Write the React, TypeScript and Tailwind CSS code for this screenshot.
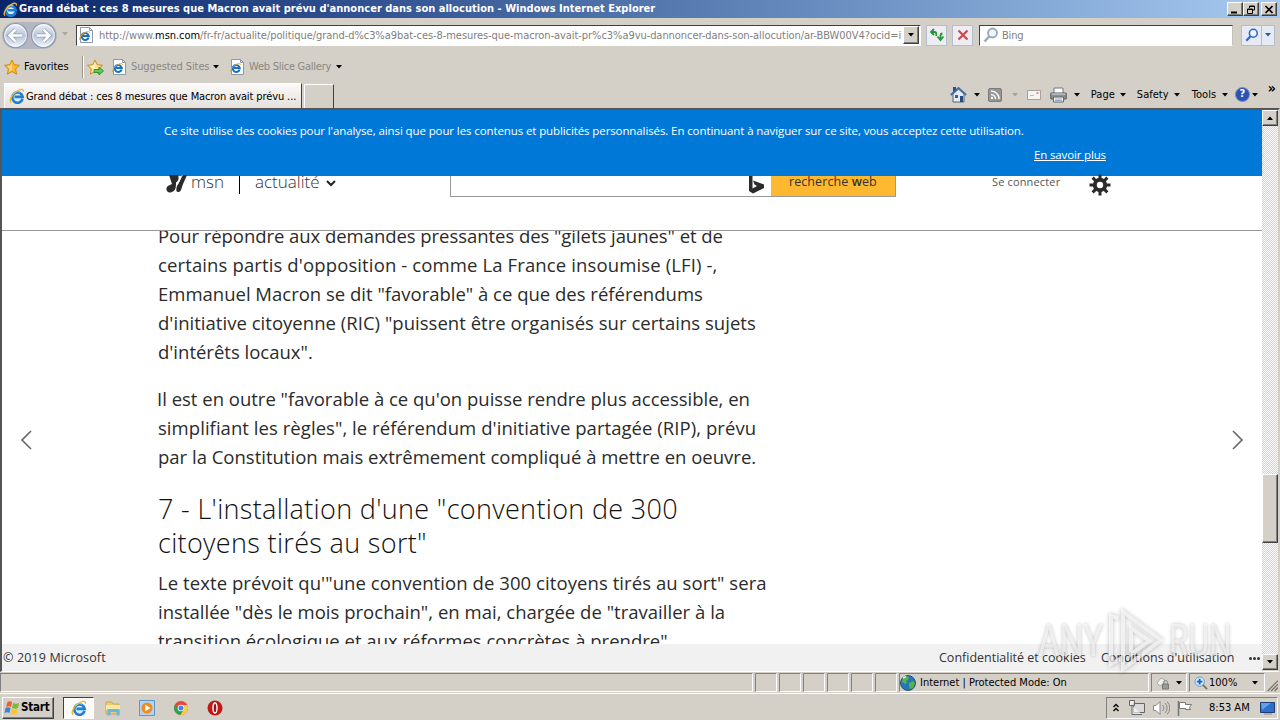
import type { ReactNode } from 'react'

const paragraphs = [
  {
    className: 'h-[144px]',
    lines: [
      { text: 'Pour répondre aux demandes pressantes des "gilets jaunes" et de', tracking: 'tracking-[-0.05px]' },
      { text: "certains partis d'opposition - comme La France insoumise (LFI) -,", tracking: 'tracking-[0.125px]' },
      { text: 'Emmanuel Macron se dit "favorable" à ce que des référendums', tracking: '' },
      { text: 'd\'initiative citoyenne (RIC) "puissent être organisés sur certains sujets', tracking: 'tracking-[0.03px]' },
      { text: 'd\'intérêts locaux".', tracking: '' },
    ],
  },
  {
    className: 'mt-[19px] h-[87px]',
    lines: [
      { text: 'Il est en outre "favorable à ce qu\'on puisse rendre plus accessible, en', tracking: '-ml-px tracking-[0px]' },
      { text: 'simplifiant les règles", le référendum d\'initiative partagée (RIP), prévu', tracking: 'tracking-[0.055px]' },
      { text: 'par la Constitution mais extrêmement compliqué à mettre en oeuvre.', tracking: '' },
    ],
  },
]

const lastParagraph = [
  { text: 'Le texte prévoit qu\'"une convention de 300 citoyens tirés au sort" sera', tracking: 'tracking-[0.075px]' },
  { text: 'installée "dès le mois prochain", en mai, chargée de "travailler à la', tracking: 'tracking-[0.02px]' },
  { text: 'transition écologique et aux réformes concrètes à prendre".', tracking: '' },
]

const raised = 'border border-t-white border-l-white border-r-[#404040] border-b-[#404040] bg-[#d4d0c8] shadow-[inset_-1px_-1px_0_#808080]'
const sunken = 'border border-t-[#808080] border-l-[#808080] border-r-white border-b-white'

function IeIcon({ size = 16 }: { size?: number }) {
  return (
    <svg width={size} height={size} viewBox="0 0 16 16" fill="none" className="shrink-0">
      <circle cx="8.2" cy="8.6" r="4.8" fill="#d8eefb" />
      <path d="M13.5 10.8A5.2 5.2 0 1 1 13.6 8.8H5.5" stroke="#1f7fd6" strokeWidth="2.7" />
      <path d="M4.2 6a4.8 4.8 0 0 1 6.8-1.8" stroke="#74ccf8" strokeWidth="1.3" />
      <path d="M2.2 14.6C-.6 12.5 3.5 5.5 9 2.5c3.5-1.9 6-1.4 5.2 1.3" stroke="#f2b824" strokeWidth="1.4" />
    </svg>
  )
}

function IePage() {
  return (
    <svg width="16" height="16" viewBox="0 0 16 16" fill="none" className="shrink-0">
      <path d="M2.5.5h9l3 3v12h-12z" fill="#fff" stroke="#8d98a8" />
      <path d="M11.5.5v3h3" stroke="#8d98a8" />
      <path d="M10.6 10.5A3.5 3.5 0 1 1 10.7 9H5" stroke="#1c70c4" strokeWidth="2.1" />
      <path d="M2 13.2C.5 11 4 6.5 8 5c2.5-.8 4-.4 3.5 1" stroke="#e5ae26" />
    </svg>
  )
}

function Caret({ className = 'text-black' }: { className?: string }) {
  return (
    <svg width="6" height="4" viewBox="0 0 6 4" className={`shrink-0 ${className}`}>
      <path d="M0 0h6L3 3.5z" fill="currentColor" />
    </svg>
  )
}

function Star({ arrow = false }: { arrow?: boolean }) {
  return (
    <svg width="17" height="17" viewBox="0 0 17 17" className="shrink-0">
      <path d="M8 1l2.2 4.7 5.3.6-3.9 3.6 1 5.2L8 12.5l-4.6 2.6 1-5.2L.5 6.3l5.3-.6z" fill={arrow ? '#fbe58b' : '#fdb92e'} stroke="#cf8a17" />
      <path d="M8 3v8l-3 1.8.8-3.3L3 7l3.5-.5z" fill="#fff" opacity=".45" />
      {arrow && <path d="M7 10.5h5V8l4.5 4-4.5 4v-2.5H7z" fill="#5ccb4c" stroke="#278528" strokeWidth=".8" />}
    </svg>
  )
}

function NavArrow({ flip = false }: { flip?: boolean }) {
  return (
    <svg width="27" height="27" viewBox="0 0 27 27" fill="none" className={flip ? '-scale-x-100' : ''}>
      <defs>
        <linearGradient id="orb" x1="0" y1="0" x2="0" y2="1">
          <stop offset="0" stopColor="#eef2f8" />
          <stop offset=".5" stopColor="#b9c5d8" />
          <stop offset="1" stopColor="#f0f7fd" />
        </linearGradient>
      </defs>
      <circle cx="13.5" cy="13.5" r="12" fill="url(#orb)" stroke="#8f99ad" strokeWidth="1.2" />
      <circle cx="13.5" cy="13.5" r="10.8" stroke="#fff" opacity=".8" />
      <path d="M13.5 7.5L7.5 13.5l6 6M8 13.5h12" stroke="#8d9cb5" strokeWidth="4" />
      <path d="M13.5 7.5L7.5 13.5l6 6M8 13.5h12" stroke="#fff" strokeWidth="2.6" />
    </svg>
  )
}

function Magnifier({ color, size = 16 }: { color: string; size?: number }) {
  return (
    <svg width={size} height={size} viewBox="0 0 16 16" fill="none" className="shrink-0">
      <circle cx="9.5" cy="6" r="4.5" fill="#eaf5fd" stroke={color} strokeWidth="1.8" />
      <path d="M6.2 9.5L1.5 14.5" stroke={color} strokeWidth="2.4" />
    </svg>
  )
}

function WindowButton({ children, className = '' }: { children: ReactNode; className?: string }) {
  return (
    <button className={`flex h-[14px] w-4 items-center justify-center ${raised} ${className}`}>
      <svg width="10" height="9" viewBox="0 0 10 9" fill="none" stroke="#000" className="shrink-0">
        {children}
      </svg>
    </button>
  )
}

function TitleBar() {
  return (
    <div className="flex h-[18px] items-center bg-linear-to-r from-[#0a246a] to-[#a6caf0] pl-[3px] pr-[3px]">
      <IeIcon size={15} />
      <span className="ml-px whitespace-nowrap text-[11px] font-bold tracking-[0.02px] text-white">
        Grand débat : ces 8 mesures que Macron avait prévu d'annoncer dans son allocution - Windows Internet Explorer
      </span>
      <div className="ml-auto flex">
        <WindowButton>
          <path d="M1 7.5h6" strokeWidth="2" />
        </WindowButton>
        <WindowButton>
          <path d="M3.5 3V1h5v4H7M3 1.5h6M1.5 4h5v4.5h-5zM1 4.5h6" />
        </WindowButton>
        <WindowButton className="ml-[2px]">
          <path d="M1.5 1l7 7M8.5 1l-7 7" strokeWidth="1.7" />
        </WindowButton>
      </div>
    </div>
  )
}

function AddressRow() {
  return (
    <div className="flex h-8 items-center pl-[2px] pr-[5px]">
      <div className="mt-[2px] flex gap-[1px] rounded-full bg-[#b4b7c2]">
        <NavArrow />
        <NavArrow flip />
      </div>
      <Caret className="ml-[5px] text-[#aaa69f]" />
      <div className="ml-[8px] mt-[2px] flex h-[21px] w-[845px] items-center border border-t-[#404040] border-l-[#404040] border-r-white border-b-white bg-white pl-px">
        <IePage />
        <span className="ml-[5px] w-[804px] overflow-hidden whitespace-nowrap pt-[2px] text-[11px] tracking-[-0.06px] text-[#808080]">
          http://www.<span className="text-black">msn.com</span>
          /fr-fr/actualite/politique/grand-d%c3%a9bat-ces-8-mesures-que-macron-avait-pr%c3%a9vu-dannoncer-dans-son-allocution/ar-BBW00V4?ocid=i
        </span>
        <span className={`flex h-[18px] w-4 items-center justify-center ${raised}`}>
          <Caret />
        </span>
      </div>
      <div className="ml-[5px] mt-[2px] flex h-[21px] w-[21px] items-center justify-center border border-[#b5bccb] bg-[#eceef4]">
        <svg width="16" height="16" viewBox="0 0 16 16" fill="none" stroke="#2a9434" strokeWidth="1.8">
          <path d="M2 5h3.5c1.200 0 1.800.8 1.800 2v2M5 2L2 5l3 3" />
          <path d="M14.5 9.500L11.500 13 8.500 9.500M11.500 13V9c0-1.500.8-2.500 2-2.500" />
        </svg>
      </div>
      <div className="ml-[5px] mt-[2px] flex h-[21px] w-[21px] items-center justify-center border border-[#b5bccb] bg-[#eceef4]">
        <svg width="12" height="12" viewBox="0 0 12 12">
          <path d="M1.5 1.5l9 9M10.5 1.5l-9 9" stroke="#d4474a" strokeWidth="2.2" />
        </svg>
      </div>
      <div className="ml-[6px] mt-[2px] flex h-[21px] w-[254px] items-center border border-t-[#404040] border-l-[#404040] border-r-[#c5c2bb] border-b-white bg-white pl-[3px] text-[11px] text-[#808080]">
        <Magnifier color="#9aa7b8" />
        <span className="ml-[3px] pt-[2px] tracking-[-0.2px]">Bing</span>
      </div>
      <div className="ml-auto mt-[2px] flex h-[21px] border border-[#b5bccb] bg-[#e6eaf4]">
        <span className="flex w-[20px] items-center justify-center border-r border-[#b5bccb]">
          <Magnifier color="#2b66cf" size={14} />
        </span>
        <span className="flex w-[12px] items-center justify-center">
          <Caret className="text-[#2a5b9c]" />
        </span>
      </div>
    </div>
  )
}

function FavoritesBar() {
  return (
    <div className="flex h-[31px] items-center pl-1 pt-[3px] text-[11px]">
      <Star />
      <span className="ml-[3px] w-[47px] text-black">Favorites</span>
      <span className="ml-[11px] h-[22px] border-l border-[#9b9890] pr-[4px] shadow-[inset_1px_0_0_#fff]" />
      <Star arrow />
      <span className="ml-[7px]" />
      <IePage />
      <span className="ml-[4px] mr-[3px] w-[79px] whitespace-nowrap tracking-[-0.1px] text-[#8a8780]">Suggested Sites</span>
      <Caret />
      <span className="ml-[10px]" />
      <IePage />
      <span className="ml-[4px] mr-[4px] w-[83px] whitespace-nowrap tracking-[-0.25px] text-[#8a8780]">Web Slice Gallery</span>
      <Caret />
    </div>
  )
}

function CommandBar() {
  return (
    <div className="ml-auto flex h-[27px] items-center pr-[4px] text-[11px] text-black">
      <svg width="17" height="17" viewBox="0 0 17 17" className="mr-[7px]">
        <path d="M3 8v8h11V8L8.5 3z" fill="#e6ecf5" stroke="#54617c" />
        <path d="M.8 9L8.5 2l7.7 7" fill="none" stroke="#4b6b9c" strokeWidth="1.8" />
        <path d="M3 1h3v3L3 6z" fill="#274da8" />
        <path d="M5 9h3v3H5z" fill="#3a5e9f" />
        <path d="M10 10h3v6h-3z" fill="#27497e" />
      </svg>
      <Caret />
      <svg width="14" height="14" viewBox="0 0 14 14" fill="none" className="ml-[8px] mr-[10px]">
        <rect x=".5" y=".5" width="13" height="13" rx="1.5" fill="#959595" stroke="#7b7b7b" />
        <path d="M3 3a8 8 0 0 1 8 8M3 6.5A4.5 4.5 0 0 1 7.5 11" stroke="#fff" strokeWidth="1.5" />
        <circle cx="4" cy="10" r="1.2" fill="#fff" />
      </svg>
      <Caret className="text-[#a5a29a]" />
      <svg width="14" height="10" viewBox="0 0 14 10" className="ml-[9px] mr-[9px]">
        <path d="M.5.5h13v9H.5z" fill="#f7f3f1" stroke="#a6a19c" />
        <path d="M9.5 2h2v2h-2z" fill="#d98d83" />
        <path d="M3 5.5h4" stroke="#bbb" />
      </svg>
      <svg width="17" height="16" viewBox="0 0 17 16" className="mr-[7px]">
        <path d="M4 1h9v6H4z" fill="#fff" stroke="#777" />
        <path d="M.8 6h15.4v6H.8z" fill="#8d8f92" stroke="#55585d" />
        <path d="M1.5 7h14" stroke="#ddd" />
        <path d="M3.5 10h10v5h-10z" fill="#f5f5f5" stroke="#666" />
        <path d="M5 12h7M5 13.5h7" stroke="#6a88b5" strokeWidth=".7" />
      </svg>
      <Caret />
      <span className="ml-[11px] mr-[3px] w-[26px] pt-px">Page</span>
      <Caret />
      <span className="ml-[11px] mr-[4px] w-[33px] pt-px">Safety</span>
      <Caret />
      <span className="ml-[12px] mr-[4px] w-[26px] pt-px">Tools</span>
      <Caret />
      <span className="ml-[7px] mr-[2px] flex h-[15px] w-[15px] items-center justify-center rounded-full border border-[#7d8caf] bg-[#2c52b8] text-[11px] font-bold text-white">
        ?
      </span>
      <Caret />
      <span className="mb-[13px] ml-[10px] text-[14px] font-bold leading-none">»</span>
    </div>
  )
}

function TabRow() {
  return (
    <div className="flex h-[27px] pl-[4px]">
      <div className="mt-[2px] flex w-[298px] items-center border border-b-0 border-l-white border-t-white border-r-[#404040] bg-linear-to-b from-[#fbfaf9] to-[#e4e0db] pl-[4px] text-[11px] text-black">
        <IeIcon />
        <span className="ml-px whitespace-nowrap pt-[2px] tracking-[-0.11px]">Grand débat : ces 8 mesures que Macron avait prévu ...</span>
      </div>
      <div className="ml-[2px] mt-[3px] w-[30px] border border-b-0 border-l-white border-t-white border-r-[#404040]" />
      <CommandBar />
    </div>
  )
}

function Header() {
  return (
    <div className="flex h-[54px] items-start bg-white pl-[163px] text-[#333]">
      <svg width="22" height="18" viewBox="0 0 22 18" className="mt-[-1px]">
        <path d="M4 0h9c1 3 1 5-2 7.5 0 4 0 8-4 9.5C3 19 0 15 2 12c1-2 4-2 5-3C6 6 5 3 4 0z" fill="#2b2b2b" />
        <path d="M22 0h-5c-1 4-3 8-5 11-1 3-1 6 1 6s3-1 4-5c1-4 3-7 5-12z" fill="#2b2b2b" />
        <path d="M17.5 0L12 10" stroke="#fff" strokeWidth=".7" />
      </svg>
      <span className="ml-[4px] h-[26px] w-[34px] font-[Open_Sans] text-[17px] font-light leading-[12px]">msn</span>
      <span className="ml-[14px] h-[18px] w-px bg-black" />
      <span className="ml-[15px] h-[26px] w-[67px] font-[Open_Sans] text-[17px] font-light leading-[12px]">actualité</span>
      <svg width="10" height="7" viewBox="0 0 10 7" fill="none" className="ml-[4px] mt-[4px]">
        <path d="M1 1l4 4 4-4" stroke="#222" strokeWidth="2" />
      </svg>
      <div className="ml-[114px] flex h-[21px] w-[446px] border border-t-0 border-[#999]">
        <svg width="16" height="18" viewBox="0 0 16 18" className="ml-[298px]">
          <path d="M0 0h3.500v12.500l4.500-2.500-2.500-1.500L4 4.500 15 8.500v3.500L4 17.500 0 15z" fill="#2b2b2b" />
        </svg>
        <span className="ml-auto w-[124px] bg-[#ffb931] pl-[18px] font-[Open_Sans] text-[12.5px] leading-[12px] tracking-[0.08px]">
          recherche <b className="font-semibold">w</b>eb
        </span>
      </div>
      <span className="ml-[96px] w-[69px] whitespace-nowrap font-[Open_Sans] text-[11px] leading-[12px] tracking-[0.15px] text-[#555]">Se connecter</span>
      <svg width="22" height="22" viewBox="-11 -11 22 22" className="ml-[28px] mt-[-2px]" fill="none" stroke="#2b2b2b">
        <circle r="5.2" strokeWidth="4" />
        <path d="M0-10.5V-6M0 6v4.5M-10.5 0H-6M6 0h4.5M-7.4-7.4l3 3M4.4 4.4l3 3M-7.4 7.4l3-3M4.4-4.4l3-3" strokeWidth="3" />
      </svg>
    </div>
  )
}

function Article() {
  return (
    <div className="h-[414px] overflow-hidden border-t border-[#999] bg-white pl-[156px] font-[Open_Sans] text-[#2b2b2b]">
      <div className="-mt-[8.6px] whitespace-nowrap text-[18.5px] leading-[28.8px]">
        {paragraphs.map((p) => (
          <div key={p.className} className={p.className}>
            {p.lines.map((line) => (
              <p key={line.text} className={line.tracking}>{line.text}</p>
            ))}
          </div>
        ))}
        <h2 className="mt-[20px] h-[68px] text-[27px] font-light leading-[34px] tracking-[0.33px] text-[#111]">
          7 - L'installation d'une "convention de 300
          <br />
          citoyens tirés au sort"
        </h2>
        <div className="mt-[9px]">
          {lastParagraph.map((line) => (
            <p key={line.text} className={line.tracking}>{line.text}</p>
          ))}
        </div>
      </div>
    </div>
  )
}

function Scrollbar() {
  return (
    <div className="mb-px flex w-4 flex-col bg-[repeating-conic-gradient(#d4d0c8_0_25%,#fff_0_50%)] bg-[length:2px_2px]">
      <span className={`flex h-4 items-center justify-center ${raised}`}>
        <Caret className="rotate-180" />
      </span>
      <span className={`mt-[348px] h-[69px] ${raised}`} />
      <span className={`mt-auto flex h-4 items-center justify-center ${raised}`}>
        <Caret />
      </span>
    </div>
  )
}

function Page() {
  return (
    <div className="flex h-[564px] border-b border-l-2 border-r-2 border-t-2 border-b-white border-l-[#555] border-r-[#d4d0c8] border-t-[#555]">
      <div className="relative flex w-[1260px] flex-col">
        <div className="flex h-[66px] flex-col bg-[#0078d7] pl-[162px] font-[Open_Sans] text-[11.5px] leading-[24px] text-white">
          <p className="mt-[9px] whitespace-nowrap tracking-[-0.105px]">
            Ce site utilise des cookies pour l'analyse, ainsi que pour les contenus et publicités personnalisés. En continuant à naviguer sur ce site, vous acceptez cette utilisation.
          </p>
          <a className="ml-[870px] whitespace-nowrap tracking-[-0.15px] underline">En savoir plus</a>
        </div>
        <Header />
        <Article />
        <div className="flex h-[27px] items-center bg-[#f1f1f1] pl-px pt-px font-[Open_Sans] text-[12.5px] text-[#333]">
          <span className="tracking-[0.13px]">© 2019 Microsoft</span>
          <span className="ml-auto w-[146px] whitespace-nowrap">Confidentialité et cookies</span>
          <span className="ml-[16px] w-[132px] whitespace-nowrap">Conditions d'utilisation</span>
          <span className="ml-[16px] mr-[2px] flex gap-[1px]">
            <i className="h-[3px] w-[3px] rounded-full bg-[#333]" />
            <i className="h-[3px] w-[3px] rounded-full bg-[#333]" />
            <i className="h-[3px] w-[3px] rounded-full bg-[#333]" />
          </span>
        </div>
        <svg width="12" height="20" viewBox="0 0 12 20" fill="none" className="absolute left-[18px] top-[320px]">
          <path d="M11 1L2 10l9 9" stroke="#666" strokeWidth="1.6" />
        </svg>
        <svg width="12" height="20" viewBox="0 0 12 20" fill="none" className="absolute right-[18px] top-[320px]">
          <path d="M1 1l9 9-9 9" stroke="#666" strokeWidth="1.6" />
        </svg>
      </div>
      <Scrollbar />
    </div>
  )
}

function StatusBar() {
  return (
    <div className="flex h-[20px] items-stretch gap-[2px] pt-px text-[11px] text-black">
      <span className={`w-[753px] shrink-0 ${sunken}`} />
      <span className={`w-[22px] shrink-0 ${sunken}`} />
      <span className={`w-[22px] shrink-0 ${sunken}`} />
      <span className={`w-[22px] shrink-0 ${sunken}`} />
      <span className={`w-[22px] shrink-0 ${sunken}`} />
      <span className={`w-[22px] shrink-0 ${sunken}`} />
      <span className={`w-[22px] shrink-0 ${sunken}`} />
      <span className={`flex w-[250px] shrink-0 items-center ${sunken}`}>
        <svg width="16" height="16" viewBox="0 0 16 16">
          <circle cx="8" cy="8" r="7.5" fill="#2376bd" stroke="#31536c" />
          <path d="M3 3c2-2 5-2 6-1L8 5 6 6l1 2-2 1-3-2zM9 8l4-2 2 2-2 5-3 1-1-3z" fill="#55b443" />
          <path d="M3 3l3-1.5" stroke="#d8f1fc" strokeWidth="1.5" />
        </svg>
        <span className="ml-[4px] whitespace-nowrap pt-[2px]">Internet | Protected Mode: On</span>
      </span>
      <span className={`flex w-[36px] shrink-0 items-center gap-[5px] pl-[4px] ${sunken}`}>
        <svg width="15" height="14" viewBox="0 0 15 14" fill="none">
          <path d="M1 7l4-5 4 2-1 3-4 3z" fill="#f1f1f1" stroke="#aaa" />
          <path d="M7.500 8V6.500a2 2 0 0 1 4 0V8" stroke="#888" />
          <path d="M6.500 8h6v5h-6z" fill="#9b9b9b" stroke="#777" />
        </svg>
        <Caret />
      </span>
      <span className={`flex w-[76px] shrink-0 items-center pl-[4px] ${sunken}`}>
        <svg width="15" height="14" viewBox="0 0 16 15" fill="none">
          <circle cx="6" cy="6" r="5" fill="#d5ecff" stroke="#5a92cf" />
          <path d="M6 3v6M3 6h6" stroke="#1c62bd" strokeWidth="2" />
          <path d="M9.5 9.5L14 14" stroke="#8c6d4d" strokeWidth="2" />
        </svg>
        <span className="w-[29px] pt-[2px]">100%</span>
        <Caret className="ml-[14px]" />
      </span>
      <svg width="12" height="14" viewBox="0 0 14 16" className="-ml-px mt-auto">
        <path d="M2 15L14 3M6 15l8-8M10 15l4-4" stroke="#77746d" strokeWidth="1.5" />
      </svg>
    </div>
  )
}

function Taskbar() {
  return (
    <div className="mt-px flex h-[27px] items-center border-t border-white pt-[1px] text-[11px] text-black">
      <button className={`ml-[2px] flex h-[22px] w-[52px] items-center pl-[1px] font-bold ${raised}`}>
        <svg width="16" height="16" viewBox="0 0 16 16" className="shrink-0">
          <path d="M3.500 2c2-1 3-1 4.500 0L7 7C5 6 4 6 2 7z" fill="#e8622c" />
          <path d="M9 3c2 1 4 1 6 0l-1 5c-2 1-4 1-6 0z" fill="#7dba35" />
          <path d="M1.500 8c2-1 3-1 5 0l-1 5c-2-1-3-1-5 0z" fill="#3e82d4" />
          <path d="M7.500 9c2 1 4 1 6 0l-1 5c-2 1-4 1-6 0z" fill="#f6c62e" />
        </svg>
        <span className="ml-px pt-px text-[11.5px] tracking-[-0.2px]">Start</span>
      </button>
      <div className="ml-[9px] flex h-[22px] w-[31px] items-center justify-center border border-l-[#404040] border-t-[#404040] border-b-white border-r-white bg-[#fbfaf9]">
        <IeIcon />
      </div>
      <svg width="16" height="16" viewBox="0 0 16 16" className="ml-[11px]">
        <path d="M1 2h6l1 2h6v10H1z" fill="#eace73" stroke="#caa651" />
        <path d="M1 5h14v5H1z" fill="#f9e8a5" />
        <path d="M2.500 15.500V9h12v6.500h-3V12h-6v3.500z" fill="#68b7e0" />
      </svg>
      <svg width="16" height="16" viewBox="0 0 16 16" className="ml-[18px]">
        <path d="M.5.5h15v15H.5z" fill="#b3d4ef" stroke="#5a97ce" />
        <circle cx="8" cy="8" r="5.5" fill="#f08a1c" />
        <path d="M6.2 4.8v6.400L11.500 8z" fill="#fff" />
      </svg>
      <svg width="14" height="14" viewBox="0 0 14 14" className="ml-[19px]">
        <circle cx="7" cy="7" r="7" fill="#e4483b" />
        <path d="M1 3.5A7 7 0 0 0 6.5 14L10 8.5 4 8.5z" fill="#2ea44f" />
        <path d="M13.3 4A7 7 0 0 1 6.5 14L10 8.5 9 4z" fill="#fbcf3b" />
        <circle cx="7" cy="7" r="3.3" fill="#fff" />
        <circle cx="7" cy="7" r="2.5" fill="#4381ea" />
      </svg>
      <svg width="16" height="16" viewBox="0 0 16 16" className="ml-[19px]">
        <circle cx="8" cy="8" r="7.5" fill="#c01717" />
        <ellipse cx="8" cy="8" rx="2" ry="5" fill="#a01010" stroke="#fff" strokeWidth="1.4" />
      </svg>
      <div className={`ml-auto mr-[2px] flex h-[22px] w-[172px] items-center ${sunken}`}>
        <svg width="6" height="9" viewBox="0 0 6 9" fill="none" className="ml-[6px]">
          <path d="M.5 4L3 1.5 5.5 4M.5 8L3 5.5 5.5 8" stroke="#000" strokeWidth="1.3" />
        </svg>
        <svg width="16" height="16" viewBox="0 0 16 16" fill="none" stroke="#666" className="ml-[10px]">
          <path d="M4.5 3.5h11v9h-11z" fill="#d9d9d9" />
          <path d="M.5.5h5v5h-5zM3 5.5V14.5h10" fill="#fff" fillOpacity=".6" />
        </svg>
        <svg width="17" height="16" viewBox="0 0 17 16" fill="none" stroke="#888" className="ml-[8px]">
          <path d="M.5 5.500H3l4-4v13l-4-4H.5z" fill="#fff" />
          <path d="M9.5 5a4 4 0 0 1 0 6M12 3a7 7 0 0 1 0 10M14 1.5a9 9 0 0 1 0 13" />
        </svg>
        <svg width="16" height="16" viewBox="0 0 16 16" fill="none" stroke="#777" className="ml-[7px]">
          <path d="M1.5 1v15" strokeWidth="1.5" />
          <path d="M2.5 2.5h6v2h6l-2 3 1 2h-5v-1h-6z" fill="#fff" />
        </svg>
        <span className="ml-[16px] w-[41px] whitespace-nowrap pt-px">8:53 AM</span>
        <svg width="15" height="14" viewBox="0 0 15 14" className="ml-[10px]">
          <path d="M.5 1.5h14v10H.5z" fill="#2e70c9" stroke="#1d3d76" />
          <path d="M1 2h10L2 9z" fill="#5fa2e8" />
          <path d="M4 13h8" stroke="#888" />
        </svg>
      </div>
    </div>
  )
}

function Watermark() {
  return (
    <div className="pointer-events-none absolute left-[1038px] top-[608px] flex h-[66px] w-[196px] items-center font-[Roboto] text-[44px] font-normal text-white/60 [text-shadow:0_0_4px_rgba(0,0,0,.26)]">
      <span className="w-[66px] origin-left scale-x-[0.76]">ANY</span>
      <svg width="60" height="66" viewBox="0 0 60 66" fill="none" className="shrink-0 drop-shadow-[0_0_2px_rgba(0,0,0,0.4)]">
        <path d="M14 10L7 8v48l9-5M19 4l38 28-38 29V4zM27 20v26l18-13z" stroke="#fff" strokeWidth="4" strokeOpacity=".65" />
      </svg>
      <span className="ml-[5px] w-[65px] origin-left scale-x-[0.72]">RUN</span>
    </div>
  )
}

export default function App() {
  return (
    <div className="relative flex h-[720px] w-[1280px] flex-col overflow-hidden bg-[#d4d0c8] font-['DejaVu_Sans_Condensed','DejaVu_Sans',sans-serif]">
      <TitleBar />
      <AddressRow />
      <FavoritesBar />
      <TabRow />
      <Page />
      <StatusBar />
      <Taskbar />
      <Watermark />
    </div>
  )
}
